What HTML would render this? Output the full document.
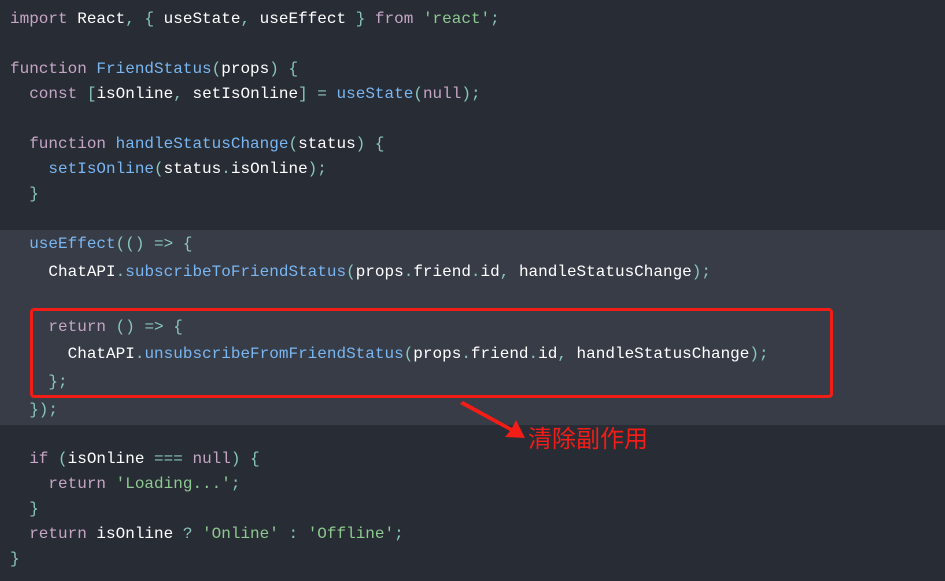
<!DOCTYPE html>
<html><head><meta charset="utf-8"><style>
body{margin:0;width:945px;height:581px;background:#282c34;overflow:hidden;position:relative;font-family:"Liberation Mono",monospace;font-size:16px}
.hl{position:absolute;left:0;top:230px;width:945px;height:195px;background:#373c47}
pre{position:absolute;left:10px;margin:0;font:inherit;line-height:25px;color:#fff}
.k{color:#c5a5c5}.p{color:#88c6be}.f{color:#79b6f2}.s{color:#8dc891}
.box{position:absolute;left:30px;top:308px;width:797px;height:84px;border:3px solid #f21d17;border-radius:4px}
.t{position:absolute;left:528px;top:421px;color:#f21d17;font:24px "Noto Sans CJK SC",sans-serif;line-height:32px}
</style></head><body>
<div class="hl"></div>
<pre style="top:7px"><span class="k">import</span> React<span class="p">,</span> <span class="p">{</span> useState<span class="p">,</span> useEffect <span class="p">}</span> <span class="k">from</span> <span class="s">'react'</span><span class="p">;</span>

<span class="k">function</span> <span class="f">FriendStatus</span><span class="p">(</span>props<span class="p">)</span> <span class="p">{</span>
  <span class="k">const</span> <span class="p">[</span>isOnline<span class="p">,</span> setIsOnline<span class="p">]</span> <span class="p">=</span> <span class="f">useState</span><span class="p">(</span><span class="k">null</span><span class="p">);</span>

  <span class="k">function</span> <span class="f">handleStatusChange</span><span class="p">(</span>status<span class="p">)</span> <span class="p">{</span>
    <span class="f">setIsOnline</span><span class="p">(</span>status<span class="p">.</span>isOnline<span class="p">);</span>
  <span class="p">}</span></pre>
<pre style="top:231px;line-height:27.6px">  <span class="f">useEffect</span><span class="p">(()</span> <span class="p">=&gt;</span> <span class="p">{</span>
    ChatAPI<span class="p">.</span><span class="f">subscribeToFriendStatus</span><span class="p">(</span>props<span class="p">.</span>friend<span class="p">.</span>id<span class="p">,</span> handleStatusChange<span class="p">);</span>

    <span class="k">return</span> <span class="p">()</span> <span class="p">=&gt;</span> <span class="p">{</span>
      ChatAPI<span class="p">.</span><span class="f">unsubscribeFromFriendStatus</span><span class="p">(</span>props<span class="p">.</span>friend<span class="p">.</span>id<span class="p">,</span> handleStatusChange<span class="p">);</span>
    <span class="p">};</span>
  <span class="p">});</span></pre>
<pre style="top:447px">  <span class="k">if</span> <span class="p">(</span>isOnline <span class="p">===</span> <span class="k">null</span><span class="p">)</span> <span class="p">{</span>
    <span class="k">return</span> <span class="s">'Loading...'</span><span class="p">;</span>
  <span class="p">}</span>
  <span class="k">return</span> isOnline <span class="p">?</span> <span class="s">'Online'</span> <span class="p">:</span> <span class="s">'Offline'</span><span class="p">;</span>
<span class="p">}</span></pre>
<div class="box"></div>
<svg style="position:absolute;left:0;top:0" width="945" height="581"><polygon points="460,404 463,401 512,428 516,420 525,438 505,437 510,431" fill="#f21d17"/></svg>
<div class="t">清除副作用</div>
</body></html>
